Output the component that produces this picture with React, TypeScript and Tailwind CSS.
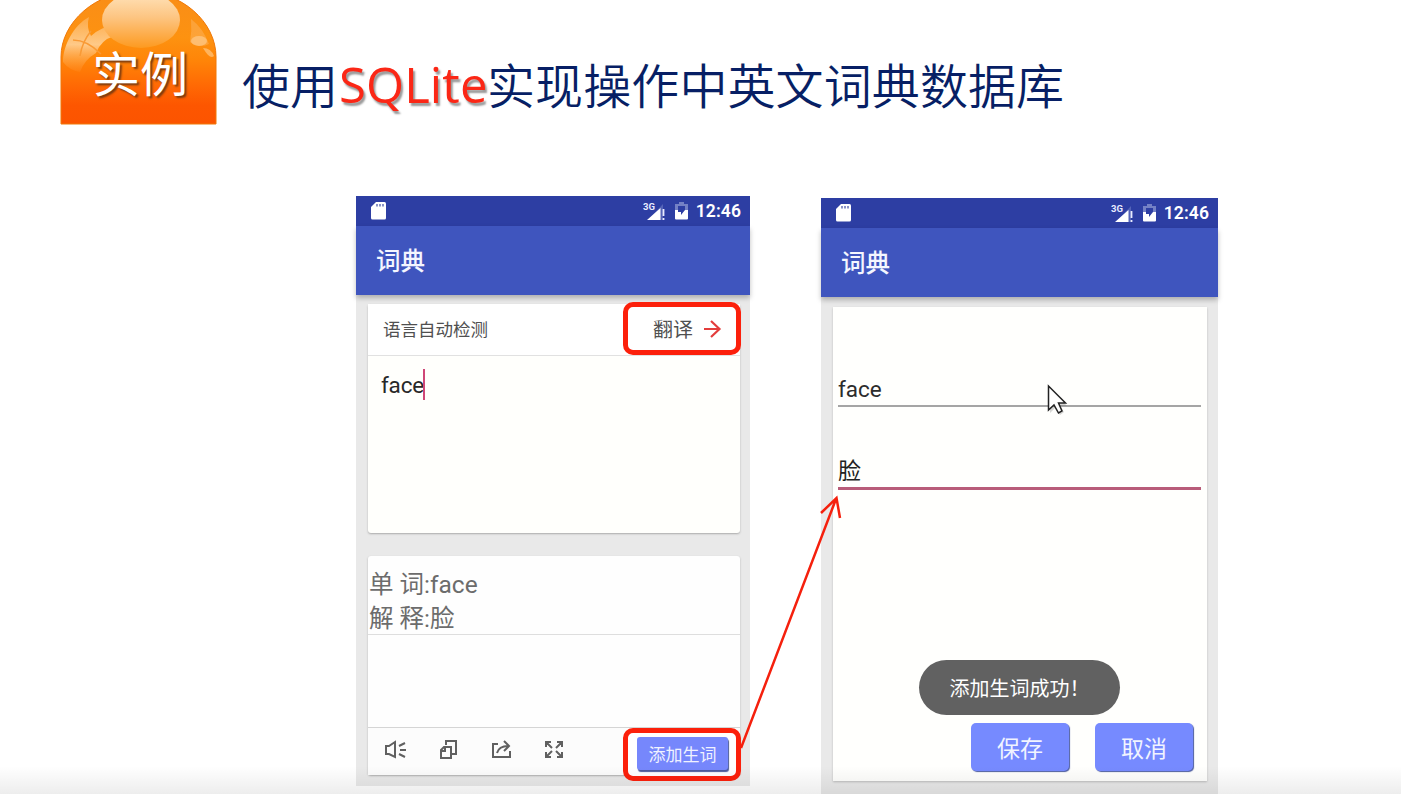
import type { ReactNode } from "react";

function Badge() {
  return (
    <div className="relative h-[125px] w-[157px] shrink-0 overflow-hidden">
      <svg className="block" width="157" height="125" viewBox="0 0 157 125">
        <defs>
          <linearGradient id="orb" x1="0" y1="0" x2="0" y2="1">
            <stop offset="0" stopColor="#f98d18" />
            <stop offset="0.35" stopColor="#fd9210" />
            <stop offset="0.52" stopColor="#ff8508" />
            <stop offset="0.72" stopColor="#ff6804" />
            <stop offset="0.86" stopColor="#fd5600" />
            <stop offset="1" stopColor="#fc5400" />
          </linearGradient>
          <linearGradient id="shine" x1="0" y1="0" x2="0" y2="1">
            <stop offset="0" stopColor="#ffe4bd" />
            <stop offset="0.45" stopColor="#fdc582" />
            <stop offset="1" stopColor="#fd9a20" />
          </linearGradient>
          <linearGradient id="side" x1="0" y1="0" x2="0" y2="1">
            <stop offset="0" stopColor="#ffd096" stopOpacity="0.4" />
            <stop offset="0.5" stopColor="#ffd8a6" stopOpacity="0.8" />
            <stop offset="1" stopColor="#ffa040" stopOpacity="0.15" />
          </linearGradient>
        </defs>
        <path d="M1 124V57C1 22 36 -9 79 -9S156 22 156 57V124Z" fill="url(#orb)" stroke="#f07808" strokeWidth="1" />
        <path d="M3 62C3 45 14 25 29 17Q26 27 31 36Q42 26 54 26Q53 31 54 36Q41 40 36 53Q24 60 20 72Q9 70 3 62Z" fill="url(#side)" />
        <path d="M13 40Q27 40 41 54M31 31Q22 42 20 56" fill="none" stroke="#f99a35" strokeWidth="1.500" />
        <ellipse cx="81" cy="20" rx="39" ry="28" fill="url(#shine)" />
        <path d="M131 19Q143 28 149 44Q140 49 130 42Q132 31 131 19Z" fill="#fdb868" opacity="0.45" />
        <ellipse cx="139" cy="41" rx="8" ry="5" fill="#ffd098" opacity="0.6" />
        <path d="M143 48Q151 48 154 56Q150 60 143 48Z" fill="#ffc680" opacity="0.7" />
      </svg>
      <div className="absolute left-[32px] top-[39px] whitespace-nowrap text-[48px] leading-[64px] text-white [text-shadow:2px_2px_2px_#7a3b10]">
        实例
      </div>
    </div>
  );
}

function StatusBar() {
  return (
    <div className="flex h-[30px] items-center bg-[#2d3ea3] pl-[15px] pr-[9px] text-white">
      <svg width="15" height="18" viewBox="0 0 15 18">
        <path d="M5 0H13.5Q15 0 15 1.500V16Q15 17.500 13.500 17.500H1.500Q0 17.500 0 16V5Z" fill="#fff" />
        <path d="M6 2V4.500M9 2V4.500M12 2V4.500" stroke="#6470b5" strokeWidth="1.500" />
      </svg>
      <div className="grow" />
      <svg className="mr-[9px]" width="23" height="19" viewBox="0 0 23 19">
        <text x="0" y="8" fontSize="9.500" fontWeight="700" fill="#e8ebff" fontFamily="Roboto, sans-serif">3G</text>
        <path d="M5 18L20 2V18Z" fill="#7b88cb" opacity="0.5" />
        <path d="M4 18L17.500 6V18Z" fill="#fff" />
        <path d="M20.500 7V14M20.500 16V18" stroke="#e8ebff" strokeWidth="1.800" />
      </svg>
      <svg className="mr-[8px]" width="13" height="18" viewBox="0 0 13 18">
        <path d="M4 0H9V2H13V9H0V2H4Z" fill="#7481c5" />
        <path d="M0 8H5L7 5V8H13V16.500Q13 17.500 12 17.500H1Q0 17.500 0 16.500Z" fill="#fff" />
        <path d="M3 4H10V8L6 13V10H3Z" fill="#2d3ea3" />
      </svg>
      <span className="font-['Roboto',sans-serif] text-[17.5px] font-semibold leading-[20px] tracking-[0.1px]">12:46</span>
    </div>
  );
}

function AppBar() {
  return (
    <div className="relative flex h-[69px] items-center bg-[#3f55be] pb-[2px] pl-[20px] text-[24.5px] font-medium leading-[34px] text-[#f4f6ff] shadow-[0_3px_5px_rgba(0,0,0,0.25)]">
      词典
    </div>
  );
}

function ToolIcon({ children }: { children: ReactNode }) {
  return (
    <svg width="22" height="22" viewBox="0 0 22 22" fill="none" stroke="#606060" strokeWidth="2">
      {children}
    </svg>
  );
}

function TranslateScreen() {
  return (
    <section className="mt-[196px] flex h-[590px] w-[394px] flex-col bg-[#e9e9e9]">
      <StatusBar />
      <AppBar />
      <div className="flex flex-col px-[12px] pt-[9px]">
        <div className="flex h-[229px] w-[372px] flex-col rounded-[3px] bg-[#fffffc] shadow-[0_1px_2px_#aaa]">
          <div className="relative flex h-[52px] items-center border-b border-[#e1e1e1] bg-white pb-[2px] pl-[15px] text-[#505050]">
            <span className="text-[17.5px] leading-[24px]">语言自动检测</span>
            <div className="absolute -right-[1px] -top-[2px] flex h-[53px] w-[118px] items-center rounded-[10px] border-[5px] border-[#fc200b] bg-white pl-[25px]">
              <span className="text-[20px] leading-[28px]">翻译</span>
              <svg className="ml-[11px]" width="18" height="18" viewBox="0 0 18 18" fill="none" stroke="#e33d3c" strokeWidth="2.200">
                <path d="M0 9H16M7 1L15.500 9L7 17" />
              </svg>
            </div>
          </div>
          <div className="flex pl-[13px] pt-[13px] text-[#282828]">
            <span className="w-[42px] pt-px font-['Roboto',sans-serif] text-[22.5px] leading-[31px] tracking-[-0.2px]">face</span>
            <span className="h-[31px] w-[2px] bg-[#cf4777]" />
          </div>
        </div>
        <div className="mt-[23px] flex h-[219px] w-[372px] flex-col rounded-[3px] bg-[#fefefe] shadow-[0_1px_2px_#aaa]">
          <div className="h-[79px] border-b border-[#dedede] pl-px pt-[12px] text-[24.5px] leading-[34px] text-[#6c6c6c]">
            <p className="whitespace-pre font-['Roboto','Noto_Sans_CJK_SC',sans-serif]">单 词:face</p>
            <p className="whitespace-pre font-['Roboto','Noto_Sans_CJK_SC',sans-serif]">解 释:脸</p>
          </div>
          <div className="h-[92px]" />
          <div className="relative flex h-[48px] items-center gap-[31px] border-t border-[#d5d5d5] bg-[#fcfcfc] pb-[3px] pl-[17px]">
            <ToolIcon>
              <path d="M1 7H4L10 3V18L4 15H1ZM14 7L20 4M15 11H21M14 15L20 18" />
            </ToolIcon>
            <ToolIcon>
              <path d="M8 6V2H18V15H14M3 11L6 8H13V19H3ZM4 12H7V9" />
            </ToolIcon>
            <ToolIcon>
              <path d="M7 5H2V18H19V12M6 14Q8 7 17 7M13 2L18 7L13 12" />
            </ToolIcon>
            <ToolIcon>
              <path d="M2 8V3H7M2 3L8 9M13 3H18V8M18 3L12 9M2 13V18H7M2 18L8 12M13 18H18V13M18 18L12 12" />
            </ToolIcon>
            <div className="absolute -right-[1px] top-0 flex h-[53px] w-[118px] items-center rounded-[10px] border-[5px] border-[#fc200b] bg-white pl-[9px]">
              <button className="mb-[2px] h-[33px] w-[91px] rounded-[3px] bg-[#7687fc] text-[17px] leading-[32px] text-[#f0f2ff] shadow-[1px_2px_1px_#4b5b9c]">
                添加生词
              </button>
            </div>
          </div>
        </div>
      </div>
    </section>
  );
}

function AddWordScreen() {
  return (
    <section className="mt-[198px] flex h-[596px] w-[397px] flex-col bg-[#e9e9e9]">
      <StatusBar />
      <AppBar />
      <div className="px-[12px] pt-[10px]">
        <div className="flex h-[474px] w-[374px] flex-col bg-[#fffffd] px-[5px] shadow-[0_1px_2px_#bbb]">
          <div className="mt-[62px] flex h-[38px] w-[363px] items-center border-b-2 border-[#a5a5a5] pt-[4px] font-['Roboto',sans-serif] text-[22.5px] leading-[30px] text-[#2c2c2c]">
            face
          </div>
          <div className="mt-[43px] flex h-[40px] w-[363px] items-center border-b-[3px] border-[#b85c79] text-[23px] leading-[34px] text-[#222]">
            脸
          </div>
          <div className="-ml-[2px] mt-[170px] flex h-[55px] w-[201px] items-center self-center rounded-full bg-[#616161] pl-[31px] text-[20px] leading-[28px] text-white">
            <span className="whitespace-nowrap">添加生词成功！</span>
          </div>
          <div className="mt-[8px] flex justify-end gap-[26px] pr-[9px]">
            <button className="h-[48px] w-[98px] rounded-[5px] bg-[#768aff] text-[23px] leading-[46px] text-[#f1f4ff] shadow-[1px_1px_1px_#4c5ca0]">
              保存
            </button>
            <button className="h-[48px] w-[98px] rounded-[5px] bg-[#768aff] text-[23px] leading-[46px] text-[#f1f4ff] shadow-[1px_1px_1px_#4c5ca0]">
              取消
            </button>
          </div>
        </div>
      </div>
    </section>
  );
}

export default function App() {
  return (
    <main className="relative h-[794px] w-[1401px] overflow-hidden bg-white font-['Noto_Sans_CJK_SC',sans-serif]">
      <div className="relative flex h-0 pl-[60px]">
        <Badge />
        <h1 className="ml-[25px] mt-[47px] flex h-[72px] whitespace-nowrap text-[48px] font-[350] leading-[72px] tracking-[0.1px] text-[#071f65]">
          <span className="w-[97px]">使用</span>
          <span className="w-[148px] pt-px font-['Open_Sans',sans-serif] text-[49px] font-medium tracking-[0.1px] text-[#fb2716] [text-shadow:2px_3px_2px_#999]">
            SQLite
          </span>
          <span>实现操作中英文词典数据库</span>
        </h1>
      </div>
      <div className="relative flex items-start gap-[71px] pl-[356px]">
        <TranslateScreen />
        <AddWordScreen />
      </div>
      <div className="pointer-events-none absolute inset-x-0 bottom-0 h-[28px] bg-linear-to-b from-black/0 to-black/7" />
      <svg className="pointer-events-none absolute left-0 top-0" width="1401" height="794" viewBox="0 0 1401 794" fill="none">
        <path d="M741 748L836 499M821 513L836.500 498L840 518" stroke="#f5200d" strokeWidth="2.500" />
        <path d="M1050 388V413L1055 408L1060 415L1064 412L1060 406H1067Z" fill="#777" opacity="0.3" />
        <path d="M1048.500 386V410L1054 405L1058.500 413L1062 411L1058.500 403H1065.500Z" fill="#fff" stroke="#222" strokeWidth="1.500" />
      </svg>
    </main>
  );
}
